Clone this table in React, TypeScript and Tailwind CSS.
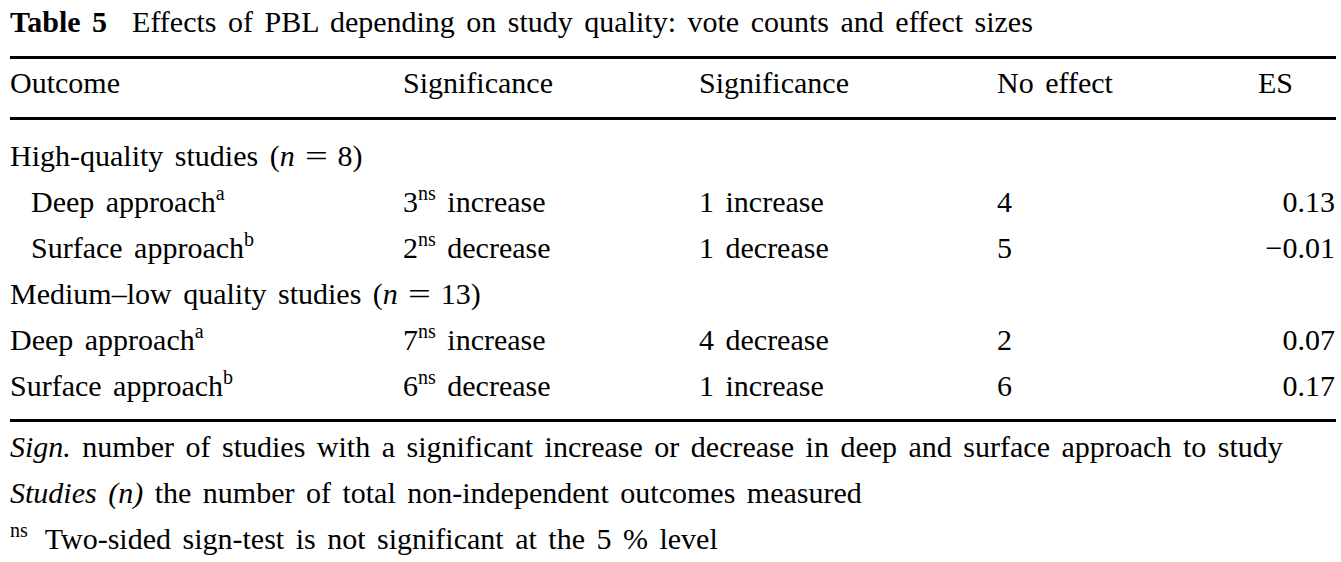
import React from "react";

const Sup = ({ children }: { children: React.ReactNode }) => (
  <sup className="text-[20px] top-[-0.6em]">{children}</sup>
);

const Eq = () => <span className="inline-block mx-[13px] scale-x-[1.35]">=</span>;

type Row = {
  label: React.ReactNode;
  indent?: boolean;
  c2?: React.ReactNode;
  c3?: string;
  c4?: string;
  c5?: string;
};

const rows: Row[] = [
  {
    label: (
      <>
        High-quality studies (<i>n</i>
        <Eq />8)
      </>
    ),
  },
  {
    label: (
      <>
        Deep approach<Sup>a</Sup>
      </>
    ),
    indent: true,
    c2: (
      <>
        3<Sup>ns</Sup> increase
      </>
    ),
    c3: "1 increase",
    c4: "4",
    c5: "0.13",
  },
  {
    label: (
      <>
        Surface approach<Sup>b</Sup>
      </>
    ),
    indent: true,
    c2: (
      <>
        2<Sup>ns</Sup> decrease
      </>
    ),
    c3: "1 decrease",
    c4: "5",
    c5: "\u22120.01",
  },
  {
    label: (
      <>
        Medium–low quality studies (<i>n</i>
        <Eq />13)
      </>
    ),
  },
  {
    label: (
      <>
        Deep approach<Sup>a</Sup>
      </>
    ),
    c2: (
      <>
        7<Sup>ns</Sup> increase
      </>
    ),
    c3: "4 decrease",
    c4: "2",
    c5: "0.07",
  },
  {
    label: (
      <>
        Surface approach<Sup>b</Sup>
      </>
    ),
    c2: (
      <>
        6<Sup>ns</Sup> decrease
      </>
    ),
    c3: "1 increase",
    c4: "6",
    c5: "0.17",
  },
];

const grid = "grid grid-cols-[393px_296px_298px_1fr_120px] h-[46px] items-center";

export default function App() {
  return (
    <div
      className="w-[1341px] h-[562px] bg-white text-black overflow-hidden"
      style={{ fontFamily: '"Liberation Serif", "Times New Roman", serif' }}
    >
      <div className="ml-[10px] w-[1326px] text-[30px] leading-[46px] [word-spacing:4px]">
        <div className="h-[46px] -mt-[1px] whitespace-nowrap">
          <b className="mr-[25px]">Table 5</b>Effects of PBL depending on study quality: vote counts and effect sizes
        </div>
        <div className="mt-[11px] h-[3px] bg-black" />
        <div className={grid + " mt-[1px]"}>
          <div>Outcome</div>
          <div>Significance</div>
          <div>Significance</div>
          <div>No effect</div>
          <div className="text-right pr-[43px]">ES</div>
        </div>
        <div className="mt-[11px] h-[3px] bg-black" />
        <div className="pt-[13px]">
          {rows.map((r, i) => (
            <div key={i} className={grid + " whitespace-nowrap"}>
              <div className={r.indent ? "pl-[21px]" : ""}>{r.label}</div>
              <div>{r.c2}</div>
              <div>{r.c3}</div>
              <div>{r.c4}</div>
              <div className="text-right pr-[1px]">{r.c5}</div>
            </div>
          ))}
        </div>
        <div className="mt-[10px] h-[3px] bg-black" />
        <div className="mt-[2px] whitespace-nowrap">
          <div className="h-[46px]">
            <i>Sign.</i> number of studies with a significant increase or decrease in deep and surface approach to study
          </div>
          <div className="h-[46px]">
            <i>Studies (n)</i> the number of total non-independent outcomes measured
          </div>
          <div className="h-[46px]">
            <sup className="text-[20px] top-[-0.6em] mr-[17px]">ns</sup>Two-sided sign-test is not significant at the 5 % level
          </div>
        </div>
      </div>
    </div>
  );
}
